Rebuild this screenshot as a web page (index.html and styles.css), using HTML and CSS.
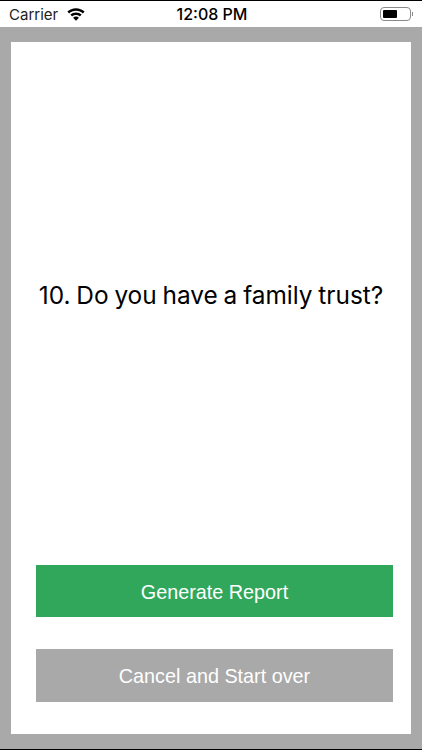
FILE: index.html

```html
<!DOCTYPE html>
<html lang="en">
<head>
    <meta charset="UTF-8">
    <meta name="viewport" content="width=device-width, initial-scale=1.0">
    <title>Family trust question</title>
    <link rel="stylesheet" href="styles.css">
</head>
<body>
    <!-- Status bar -->
    <div class="status-bar">
        <div class="status-left">
            <span class="carrier">Carrier</span>
            <svg class="wifi" width="18" height="13" viewBox="0 0 18 13">
                <path d="M9 0.2C5.6 0.2 2.6 1.5 0.4 3.6L2.1 5.4C3.9 3.7 6.3 2.7 9 2.7s5.1 1 6.9 2.7l1.7-1.8C15.4 1.5 12.4 0.2 9 0.2z" fill="#000"/>
                <path d="M9 4.4c-2.2 0-4.2 0.9-5.6 2.2l1.7 1.8C6.1 7.4 7.5 6.9 9 6.9s2.9 0.5 3.9 1.5l1.7-1.8C13.2 5.3 11.2 4.4 9 4.4z" fill="#000"/>
                <path d="M9 8.6c-1.1 0-2.1 0.4-2.9 1.1L9 12.8l2.9-3.1C11.1 9 10.1 8.6 9 8.6z" fill="#000"/>
            </svg>
        </div>
        <span class="clock">12:08 PM</span>
        <div class="status-right">
            <div class="battery"><div class="battery-level"></div></div>
            <div class="battery-cap"></div>
        </div>
    </div>

    <!-- Page content -->
    <div class="page">
        <div class="card">
            <div class="question-area">
                <h1 class="question">10. Do you have a family trust?</h1>
            </div>
            <div class="actions">
                <button class="btn btn-green">Generate Report</button>
                <button class="btn btn-gray">Cancel and Start over</button>
            </div>
        </div>
    </div>
</body>
</html>
```

FILE: styles.css

```css
html, body {
    margin: 0;
    padding: 0;
}
body {
    width: 422px;
    height: 750px;
    overflow: hidden;
    display: flex;
    flex-direction: column;
    font-family: Inter, "Liberation Sans", sans-serif;
    background-color: #a9a9a9;
    border-top: 1px solid #000;
    border-bottom: 1px solid #000;
    box-sizing: border-box;
}
.status-bar {
    height: 26px;
    background-color: #fff;
    display: grid;
    grid-template-columns: 1fr auto 1fr;
    align-items: center;
    padding: 0 9px;
    flex-shrink: 0;
}
.status-left {
    display: flex;
    align-items: center;
    gap: 9px;
}
.carrier {
    font-size: 15px;
    color: #222;
}
.clock {
    font-size: 16px;
    font-weight: 500;
    color: #000;
    margin-left: 2px;
}
.status-right {
    display: flex;
    align-items: center;
    justify-content: flex-end;
    gap: 1px;
}
.battery {
    width: 31px;
    height: 14px;
    box-sizing: border-box;
    border: 1px solid #8a8a8a;
    border-radius: 4px;
    padding: 2px;
}
.battery-level {
    width: 14px;
    height: 100%;
    background-color: #000;
    border-radius: 1px;
}
.battery-cap {
    width: 1px;
    height: 4px;
    background-color: #8a8a8a;
}
.page {
    flex: 1;
    min-height: 0;
    display: flex;
    padding: 14.6px 11px 14.7px;
}
.card {
    flex: 1;
    min-width: 0;
    background-color: #fff;
    display: flex;
    flex-direction: column;
}
.question-area {
    flex: 1;
    padding-top: 232px;
}
.question {
    margin: 0;
    font-size: 24.4px;
    font-weight: 400;
    word-spacing: -1px;
    line-height: 42px;
    color: #000;
    text-align: center;
    white-space: nowrap;
}
.actions {
    display: flex;
    flex-direction: column;
    gap: 31.7px;
    margin: 0 18px 32.6px 25px;
}
.btn {
    display: block;
    width: 100%;
    height: 52.7px;
    border: none;
    padding: 3px 0 0;
    font-family: "Liberation Sans", Arial, sans-serif;
    font-size: 19.8px;
    color: #fff;
}
.btn-green {
    background-color: #31a75c;
}
.btn-gray {
    background-color: #a9a9a9;
}
```
